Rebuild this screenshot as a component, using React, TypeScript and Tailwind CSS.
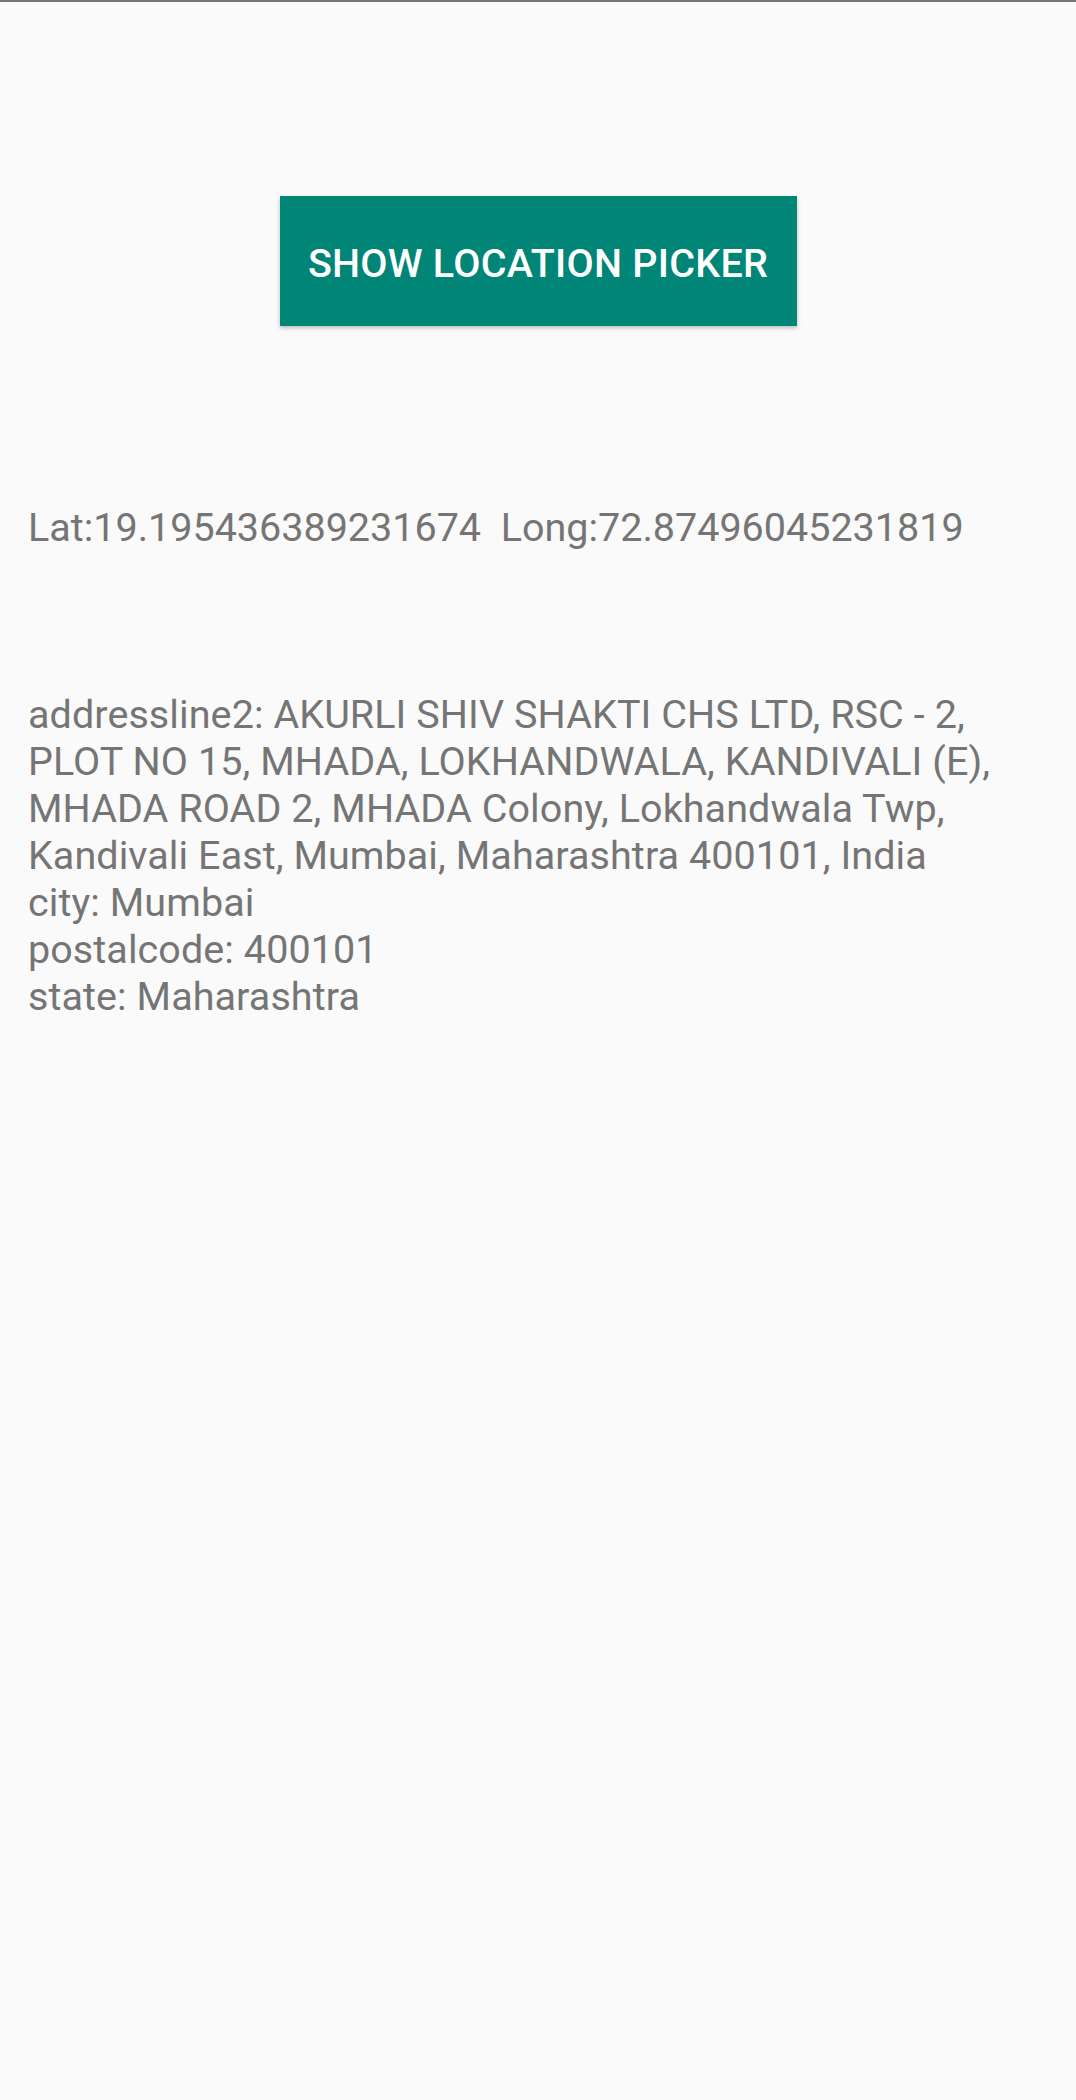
export default function App() {
  const addressLines = [
    "addressline2: AKURLI SHIV SHAKTI CHS LTD, RSC - 2,",
    "PLOT NO 15, MHADA, LOKHANDWALA, KANDIVALI (E),",
    "MHADA ROAD 2, MHADA Colony, Lokhandwala Twp,",
    "Kandivali East, Mumbai, Maharashtra 400101, India",
    "city: Mumbai",
    "postalcode: 400101",
    "state: Maharashtra",
  ];

  return (
    <div
      className="w-[1076px] h-[2100px] bg-[#fafafa] flex flex-col"
      style={{ fontFamily: "Roboto, 'Liberation Sans', sans-serif" }}
    >
      <div className="h-[2px] bg-[#757575]" />

      <div className="flex justify-center pt-[194px]">
        <button className="w-[517px] h-[130px] pt-[5px] bg-[#008577] text-white text-[39.5px] font-medium tracking-[0.25px] shadow-[0_2px_4px_rgba(0,0,0,0.25)]">
          SHOW LOCATION PICKER
        </button>
      </div>

      <div className="px-[28px] text-[#757575] text-[39.5px] leading-[47px]">
        <p className="mt-[178px] whitespace-pre">Lat:19.195436389231674  Long:72.87496045231819</p>

        <div className="mt-[140px] tracking-[0.08px]">
          {addressLines.map((line, i) => (
            <p key={i} className="whitespace-nowrap">
              {line}
            </p>
          ))}
        </div>
      </div>
    </div>
  );
}
